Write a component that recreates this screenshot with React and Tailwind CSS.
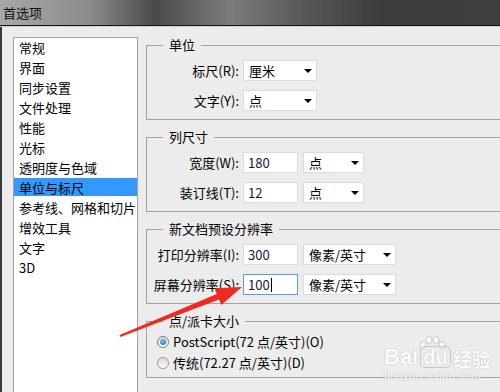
import React from "react";

const items = [
  "常规",
  "界面",
  "同步设置",
  "文件处理",
  "性能",
  "光标",
  "透明度与色域",
  "单位与标尺",
  "参考线、网格和切片",
  "增效工具",
  "文字",
  "3D",
];

const Group = ({ title, h, children }) => (
  <div className={`relative border border-[#a3a3a3] ${h}`}>
    <span className="absolute left-[16px] top-[-9px] px-[6px] bg-[#ececec] leading-[16px]">
      {title}
    </span>
    {children}
  </div>
);

const Row = ({ label, children }) => (
  <div className="flex items-center h-[21px]">
    <span className="w-[92px] shrink-0 text-right whitespace-nowrap">{label}</span>
    <div className="ml-[4px] flex gap-[5px]">{children}</div>
  </div>
);

const Field = ({ value, focus }) => (
  <div
    className={`w-[55px] h-[21px] bg-white flex items-center pl-[4px] text-[#14143c] border ${
      focus ? "border-[#5b9ee0]" : "border-[#dcdcdc]"
    }`}
  >
    {value}
    {focus && <span className="w-px h-[14px] bg-black ml-px" />}
  </div>
);

const Select = ({ value, w }) => (
  <div className={`${w} h-[21px] bg-white border border-[#dcdcdc] flex items-center justify-between pl-[5px] pr-[4px]`}>
    <span>{value}</span>
    <span className="w-0 h-0 border-l-[4px] border-r-[4px] border-t-[4px] border-l-transparent border-r-transparent border-t-black" />
  </div>
);

const Radio = ({ checked, label }) => (
  <div className="flex items-center h-[21px] gap-[4px]">
    {checked ? (
      <span className="w-[12px] h-[12px] rounded-full border border-[#7d7d7d] bg-[linear-gradient(#dcdcdc,#f8f8f8)] flex items-center justify-center">
        <span className="w-[6px] h-[6px] rounded-full bg-[radial-gradient(circle_at_40%_35%,#7cc8f2,#11609e)]" />
      </span>
    ) : (
      <span className="w-[12px] h-[12px] rounded-full border border-[#9a9a9a] bg-[linear-gradient(#d8d8d8,#fbfbfb)]" />
    )}
    <span className="whitespace-nowrap">{label}</span>
  </div>
);

export default function App() {
  return (
    <div className="relative w-[500px] h-[392px] overflow-hidden bg-[#ececec] text-[13px] text-black font-['Noto_Sans_CJK_SC','Noto_Sans',sans-serif]">
      {/* title bar */}
      <div className="h-[25px] flex items-center pl-[3px] bg-[linear-gradient(90deg,#a8a8a8_0%,#8c8c8c_18%,#4a4a4a_31%,#7c7c7c_46%,#5a5a5a_60%,#3c3c3c_76%,#3e3e3e_100%)]">
        <span className="text-[#101010] leading-none">首选项</span>
      </div>
      <div className="h-px bg-[#161616]" />
      <div className="h-px bg-[#cfcfcf]" />

      {/* body */}
      <div className="flex items-start border-l-2 border-[#3a3a3a] pl-[11px] pt-[10px] h-[365px]">
        <div className="w-[125px] h-[400px] shrink-0 bg-white border border-[#a3a3a3]">
          {items.map((it) =>
            it === "单位与标尺" ? (
              <div key={it} className="h-[18px] mb-[2px] bg-[#3399ff] pl-[5px] leading-[20px]">
                {it}
              </div>
            ) : (
              <div key={it} className="h-[20px] pl-[5px] leading-[20px] whitespace-nowrap">
                {it}
              </div>
            )
          )}
        </div>

        <div className="ml-[8px] mt-[8px] w-[370px] shrink-0 flex flex-col gap-[17px]">
          <Group title="单位" h="h-[75px]">
            <div className="pt-[14px] flex flex-col gap-[9px]">
              <Row label="标尺(R):">
                <Select value="厘米" w="w-[74px]" />
              </Row>
              <Row label="文字(Y):">
                <Select value="点" w="w-[74px]" />
              </Row>
            </div>
          </Group>

          <Group title="列尺寸" h="h-[75px]">
            <div className="pt-[14px] flex flex-col gap-[9px]">
              <Row label="宽度(W):">
                <Field value="180" />
                <Select value="点" w="w-[61px]" />
              </Row>
              <Row label="装订线(T):">
                <Field value="12" />
                <Select value="点" w="w-[61px]" />
              </Row>
            </div>
          </Group>

          <Group title="新文档预设分辨率" h="h-[75px]">
            <div className="pt-[14px] flex flex-col gap-[9px]">
              <Row label="打印分辨率(I):">
                <Field value="300" />
                <Select value="像素/英寸" w="w-[93px]" />
              </Row>
              <Row label="屏幕分辨率(S):">
                <Field value="100" focus />
                <Select value="像素/英寸" w="w-[93px]" />
              </Row>
            </div>
          </Group>

          <Group title="点/派卡大小" h="h-[57px]">
            <div className="pt-[9px] pl-[10px] flex flex-col">
              <Radio checked label="PostScript(72 点/英寸)(O)" />
              <Radio label="传统(72.27 点/英寸)(D)" />
            </div>
          </Group>
        </div>
      </div>

      {/* baidu watermark */}
      <div className="absolute left-[384px] top-[336px] flex flex-col items-start text-white [text-shadow:0_0_1px_#b8b8b8,0_0_1px_#b8b8b8] opacity-90">
        <svg width="28" height="14" viewBox="0 0 28 14" className="ml-[34px] mb-[-4px]">
          <g fill="#fff" stroke="#c4c4c4" strokeWidth="1">
            <ellipse cx="5" cy="9" rx="3" ry="3.5" />
            <ellipse cx="11" cy="4" rx="3" ry="3.5" />
            <ellipse cx="18" cy="4" rx="3" ry="3.5" />
            <ellipse cx="24" cy="9" rx="3" ry="3.5" />
          </g>
        </svg>
        <div className="flex items-end leading-none font-['Liberation_Sans','Noto_Sans_CJK_SC',sans-serif] font-bold text-[22px]">
          <span>Bai</span>
          <span className="ml-[2px] px-[2px] rounded-[5px] border border-[#c4c4c4] text-[20px]">du</span>
          <span className="ml-[2px] text-[19px] font-['Noto_Sans_CJK_SC',sans-serif]">经验</span>
        </div>
        <span className="text-[11px] leading-[14px] tracking-[0.5px] font-['Liberation_Sans',sans-serif]">jingyan.baidu.com</span>
      </div>

      {/* red arrow */}
      <svg className="absolute inset-0 pointer-events-none" width="500" height="392" viewBox="0 0 500 392">
        <polygon
          fill="#ef2a1e"
          points="119.6,335.1 216.8,293.9 214.5,288.3 242,287 221.3,305.1 219,299.5 120.4,336.9"
        />
      </svg>
    </div>
  );
}
